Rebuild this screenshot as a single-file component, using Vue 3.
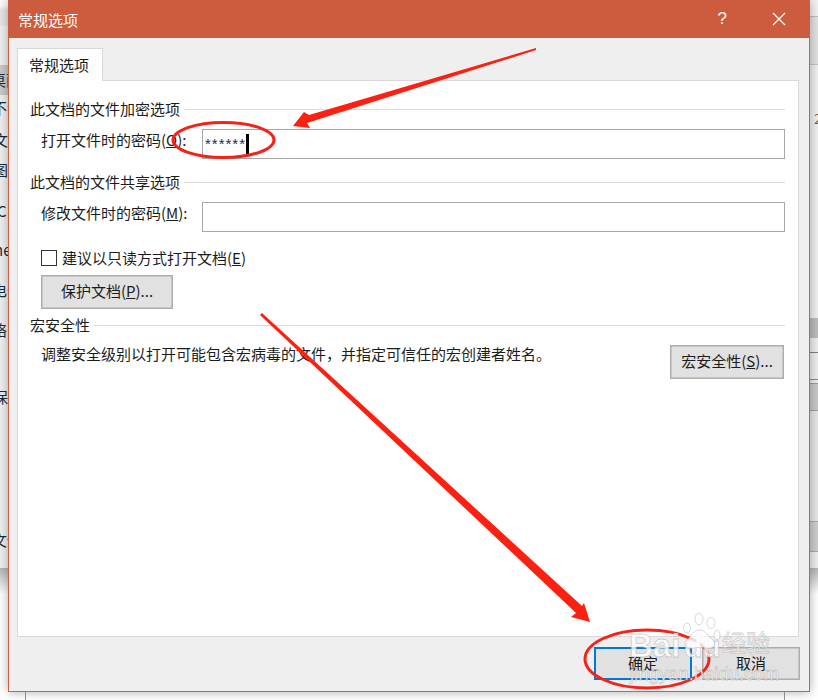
<script setup>
const leftGlyphs = [
  { t: '桌面', y: 80, x: -9 },
  { t: '不参', y: 108, x: -8 },
  { t: '文档', y: 140, x: -7 },
  { t: '图片', y: 170, x: -7 },
  { t: 'C', y: 211, x: -3 },
  { t: 'ne', y: 250, x: -6 },
  { t: '电子', y: 290, x: -8 },
  { t: '络', y: 330, x: -8 },
  { t: '保存', y: 397, x: -7 },
  { t: '文件', y: 540, x: -8 }
]
const rowHeight = 20
const leftRows = leftGlyphs.map((g, i) => {
  const prev = i === 0 ? 0 : leftGlyphs[i - 1].y + rowHeight / 2
  return { ...g, gap: g.y - rowHeight / 2 - prev }
})
const rightBands = [
  { h: 16, c: '#f2f2f2' },
  { h: 1, c: '#bdbdbd' },
  { h: 47, c: '#e2e2e2' },
  { h: 1, c: '#c4c4c4' },
  { h: 253, c: '#f0f0f0' },
  { h: 20, c: '#bcbcbc' },
  { h: 14, c: '#eeeeee' },
  { h: 1, c: '#808080' },
  { h: 26, c: '#eeeeee' },
  { h: 1, c: '#8a8a8a' },
  { h: 3, c: '#eeeeee' },
  { h: 1, c: '#9a9a9a' },
  { h: 26, c: '#c8c8c8' },
  { h: 1, c: '#a0a0a0' },
  { h: 110, c: '#e6e6e6' },
  { h: 1, c: '#a8a8a8' },
  { h: 29, c: '#cdcdcd' },
  { h: 1, c: '#a8a8a8' },
  { h: 17, c: '#eeeeee' }
]
</script>

<template>
  <div class="screen">
    <aside class="strip left">
      <div class="strip-top"></div>
      <div class="glyphs">
        <div class="selected"></div>
        <div
          v-for="r in leftRows"
          :key="r.y"
          class="glyph"
          :style="{ marginTop: r.gap + 'px', marginLeft: r.x + 'px' }"
        >{{ r.t }}</div>
      </div>
    </aside>

    <div class="center">
      <section class="dialog">
        <header class="titlebar">
          <span class="title">常规选项</span>
          <span class="help">?</span>
          <svg class="close" width="14" height="14" viewBox="0 0 14 14">
            <path d="M1 1 L13 13 M13 1 L1 13" stroke="#fff" stroke-width="1.2" fill="none" />
          </svg>
        </header>

        <div class="body">
          <div class="tab">常规选项</div>
          <div class="pane">
            <div class="head"><span>此文档的文件加密选项</span><i></i></div>
            <div class="field">
              <label>打开文件时的密码(<u>O</u>):</label>
              <div class="input"><span class="stars">******</span><span class="caret"></span></div>
            </div>

            <div class="head second"><span>此文档的文件共享选项</span><i></i></div>
            <div class="field">
              <label>修改文件时的密码(<u>M</u>):</label>
              <div class="input"></div>
            </div>

            <div class="check">
              <span class="box"></span>
              <span class="check-text">建议以只读方式打开文档(<u>E</u>)</span>
            </div>
            <button class="btn protect">保护文档(<u>P</u>)...</button>

            <div class="head third"><span>宏安全性</span><i></i></div>
            <div class="macro">
              <p>调整安全级别以打开可能包含宏病毒的文件，并指定可信任的宏创建者姓名。</p>
              <button class="btn macro-btn">宏安全性(<u>S</u>)...</button>
            </div>
          </div>

          <footer class="actions">
            <button class="btn action default">确定</button>
            <button class="btn action">取消</button>
          </footer>
        </div>
      </section>
      <div class="under"></div>
    </div>

    <aside class="strip right">
      <div
        v-for="(b, i) in rightBands"
        :key="i"
        class="band"
        :style="{ height: b.h + 'px', background: b.c }"
      ></div>
      <span class="frag">2</span>
    </aside>

    <svg class="marks" width="818" height="700" viewBox="0 0 818 700">
      <polygon points="536,48 309,115 304,112 293,126 310,128 307,123 536,50" fill="#fb2112" />
      <ellipse cx="223.5" cy="140" rx="50.5" ry="17.5" fill="none" stroke="#f4231a" stroke-width="3" />
      <polygon points="262,313 582,606 584,603 590,622 571,617 576,613 260,315" fill="#fb2112" />
      <ellipse cx="647" cy="659" rx="62" ry="29" fill="none" stroke="#f4231a" stroke-width="3" />

      <g class="wm">
        <text x="629" y="657" class="wm-bai">Bai</text>
        <text x="684" y="657" class="wm-du">du</text>
        <ellipse cx="687" cy="628" rx="3.5" ry="5" />
        <ellipse cx="699" cy="619" rx="4" ry="6" />
        <ellipse cx="711" cy="623" rx="4" ry="5.5" />
        <ellipse cx="717" cy="635" rx="3" ry="4.5" />
        <path d="M700 630 C693 630 691 637 687 640 C682 645 688 650 694 648 C698 647 702 647 707 648 C713 650 717 644 713 640 C708 637 706 630 700 630 Z" />
        <text x="722" y="652" class="wm-jy">经验</text>
        <text x="630" y="680" class="wm-url">jingyan.baidu.com</text>
      </g>
    </svg>
  </div>
</template>

<style>
html, body { margin: 0; background: #fff; }
</style>

<style scoped>
.screen {
  position: relative;
  display: flex;
  width: 818px;
  height: 700px;
  overflow: hidden;
  background: #fff linear-gradient(#b4b4b4, #ffffff) 0 568px / 100% 26px no-repeat;
  font-family: "Noto Sans CJK SC", "Noto Sans", sans-serif;
  font-size: 15px;
  color: #1c1c1c;
}
.strip {
  width: 8px;
  height: 568px;
  flex: none;
  overflow: hidden;
  background: #f0f0f0;
}
.strip-top {
  height: 26px;
  background: linear-gradient(#fafafa 6px, #e6e6e6 10px);
}
.glyphs {
  position: relative;
  height: 542px;
  margin-top: -26px;
}
.selected {
  height: 30px;
  margin-top: 65px;
  margin-bottom: -95px;
  background: #c9c9c9;
}
.strip.left { display: flex; flex-direction: column; }
.glyph {
  position: relative;
  height: 20px;
  line-height: 20px;
  white-space: nowrap;
  color: #1a2a3a;
}
.center {
  width: 802px;
  flex: none;
  position: relative;
  z-index: 1;
}
.dialog {
  box-sizing: border-box;
  height: 692px;
  background: #efefef;
  border: 1px solid #d2603f;
  border-top: 0;
  box-shadow: 0 0 10px rgba(0, 0, 0, 0.32);
}
.titlebar {
  display: flex;
  align-items: center;
  height: 38px;
  margin: 0 -1px;
  padding: 0 24px 0 10px;
  background: #cd5c3f;
  color: #fff;
}
.title { flex: 1; }
.help {
  margin-right: 45px;
  font-family: "Liberation Sans", sans-serif;
  font-size: 17px;
}
.close { display: block; }
.body { padding: 10px 9px 0 8px; }
.tab {
  box-sizing: border-box;
  position: relative;
  z-index: 1;
  width: 86px;
  height: 33px;
  margin-bottom: -1px;
  padding-left: 11px;
  line-height: 32px;
  background: #fff;
  border: 1px solid #d9d9d9;
  border-bottom: 0;
}
.pane {
  box-sizing: border-box;
  width: 782px;
  height: 557px;
  padding: 18px 13px 0 12px;
  background: #fff;
  border: 1px solid #d9d9d9;
}
.head {
  display: flex;
  align-items: center;
  gap: 4px;
  height: 20px;
  line-height: 20px;
}
.head i {
  flex: 1;
  height: 1px;
  background: #dcdcdc;
}
.second { margin-top: 13px; }
.third { margin-top: 6px; }
.field {
  display: flex;
  align-items: flex-start;
  margin-top: 10px;
  padding-left: 11px;
  line-height: 22px;
}
.field label { width: 161px; flex: none; }
.input {
  box-sizing: border-box;
  display: flex;
  align-items: center;
  flex: 1;
  height: 30px;
  padding-left: 2px;
  background: #fff;
  border: 1px solid #a8a8a8;
}
.stars {
  font-family: "Liberation Sans", sans-serif;
  font-size: 15px;
  letter-spacing: 1px;
  color: #1a2a4a;
}
.caret {
  width: 3px;
  height: 21px;
  background: #000;
}
.check {
  display: flex;
  align-items: center;
  gap: 5px;
  height: 16px;
  margin-top: 18px;
  padding-left: 11px;
}
.check-text { margin-top: -1px; }
.box {
  box-sizing: border-box;
  width: 16px;
  height: 16px;
  background: #fff;
  border: 1px solid #333;
}
.btn {
  box-sizing: border-box;
  display: block;
  padding: 0 0 3px;
  background: #e1e1e1;
  border: 1px solid #adadad;
  border-radius: 0;
  font: inherit;
  color: inherit;
  box-shadow: inset 0 0 0 0.5px #adadad;
}
.protect {
  width: 132px;
  height: 34px;
  margin: 9px 0 0 11px;
}
.macro {
  display: flex;
  justify-content: space-between;
  align-items: flex-start;
  margin-top: 10px;
  padding: 0 1px 0 11px;
}
.macro p {
  margin: -1px 0 0;
  line-height: 20px;
}
.macro-btn {
  width: 114px;
  height: 34px;
}
.actions {
  display: flex;
  justify-content: flex-end;
  gap: 10px;
  margin-top: 10px;
}
.action { width: 98px; height: 33px; }
.default {
  border: 2px solid #0078d7;
  box-shadow: none;
}
.under {
  box-sizing: border-box;
  width: 760px;
  height: 8px;
  margin-left: 17px;
  border: 1px solid #8e8e8e;
  border-width: 0 1px;
}
.strip.right {
  position: relative;
}
.band { width: 100%; }
.frag {
  position: absolute;
  top: 108px;
  left: 4px;
  font-size: 14px;
  line-height: 20px;
  color: #8a6a3a;
}
.marks {
  position: absolute;
  top: 0;
  left: 0;
  z-index: 2;
  pointer-events: none;
}
.wm {
  fill: rgba(255, 255, 255, 0.8);
  stroke: rgba(140, 140, 140, 0.42);
  stroke-width: 0.8;
}
.wm-bai, .wm-du {
  font-family: "Liberation Sans", sans-serif;
  font-weight: 700;
  font-size: 33px;
}
.wm-du { font-size: 30px; }
.wm-jy {
  font-family: "Noto Sans CJK SC", sans-serif;
  font-size: 24px;
}
.wm-url {
  font-family: "Liberation Sans", sans-serif;
  font-size: 18.5px;
}
</style>
